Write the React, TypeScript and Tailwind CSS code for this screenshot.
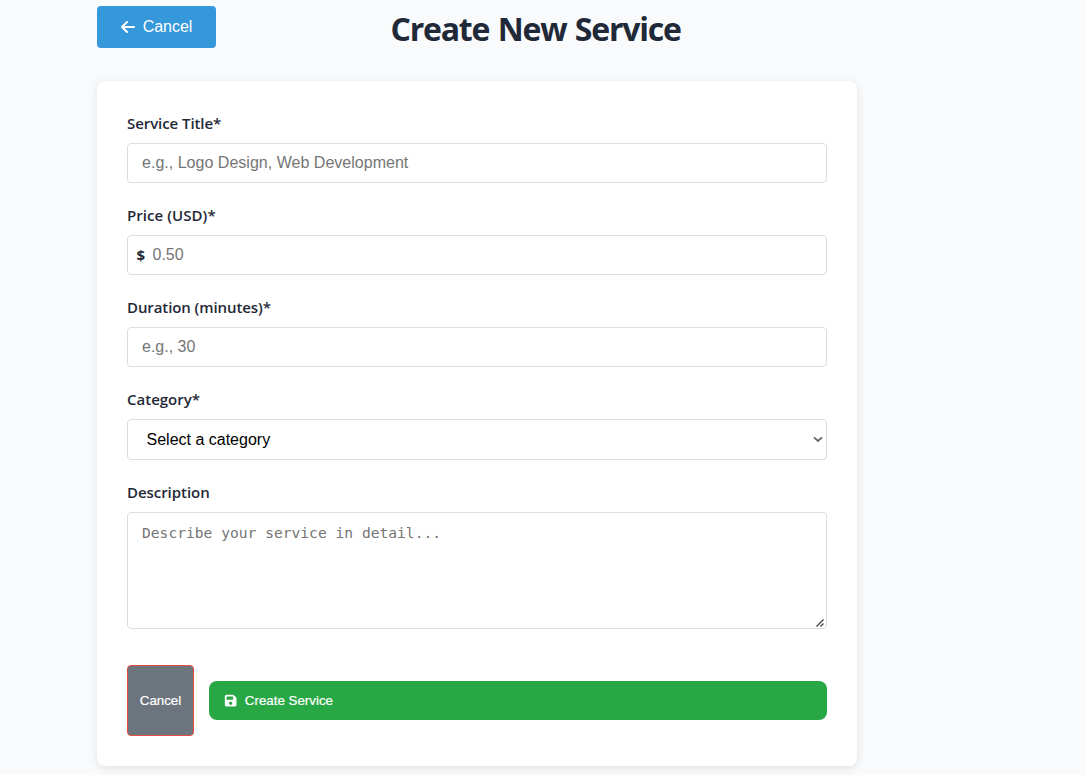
import type { ReactNode } from "react";
import { FaArrowLeft, FaFloppyDisk } from "react-icons/fa6";

const control =
  "block w-full rounded-[4px] border border-[#dddddd] bg-white font-['Liberation_Sans',Arial,sans-serif] text-base outline-none placeholder:text-[#757575] placeholder:opacity-100";

function Field({ id, label, labelClass = "", children }: { id: string; label: string; labelClass?: string; children: ReactNode }) {
  return (
    <div className="flex flex-col gap-2">
      <label htmlFor={id} className="flex h-6 items-center text-[15px] font-semibold text-[#1f2937]">
        <span className={`whitespace-nowrap ${labelClass}`}>{label}</span>
      </label>
      {children}
    </div>
  );
}

export default function App() {
  return (
    <main className="h-[775px] overflow-hidden bg-[#f8fafc] pt-1.5 pl-[97px] font-['Open_Sans','Noto_Sans',sans-serif]">
      <header className="flex h-[42px] items-center">
        <button type="button" className="flex h-[42px] w-[119px] items-center justify-center gap-2 rounded-[4px] bg-[#3498db] font-['Liberation_Sans',Arial,sans-serif] text-base tracking-[-0.05px] text-white">
          <FaArrowLeft className="h-4 w-3.5" preserveAspectRatio="none" />
          Cancel
        </button>
        <h1 className="ml-[174.5px] whitespace-nowrap pt-1 text-[32px] leading-[42px] font-bold tracking-[-1.2px] text-[#1f2937] [word-spacing:1.3px]">Create New Service</h1>
      </header>

      <form className="mt-[33px] flex h-[685px] w-[760px] flex-col gap-5 rounded-lg bg-white p-[30px] shadow-[0_2px_10px_rgba(0,0,0,0.1)]">
        <Field id="title" label="Service Title*" labelClass="tracking-[-0.07px]">
          <input id="title" className={`${control} h-10 px-[14px] tracking-[0.02px]`} placeholder="e.g., Logo Design, Web Development" />
        </Field>
        <Field id="price" label="Price (USD)*" labelClass="tracking-[0.06px]">
          <div className="relative">
            <span className="absolute top-2 left-[9.5px] text-[15px] leading-6 font-bold text-[#1f2937]">$</span>
            <input id="price" className={`${control} h-10 pr-[14px] pl-[24.5px]`} placeholder="0.50" />
          </div>
        </Field>
        <Field id="duration" label="Duration (minutes)*" labelClass="tracking-[-0.09px]">
          <input id="duration" className={`${control} h-10 px-[14px]`} placeholder="e.g., 30" />
        </Field>
        <Field id="category" label="Category*">
          <div className="relative">
            <select id="category" className={`${control} h-[41px] appearance-none px-[18.5px] text-black`}>
              <option>Select a category</option>
            </select>
            <svg className="pointer-events-none absolute top-[17px] right-1 h-[7px] w-[10px]" viewBox="0 0 10 7" fill="none" stroke="#666666" strokeWidth="1.8">
              <path d="M1 1.3 5 5 9 1.3" />
            </svg>
          </div>
        </Field>
        <Field id="description" label="Description" labelClass="tracking-[-0.05px]">
          <div className="relative">
            <textarea
              id="description"
              className="block h-[117px] w-full resize-none rounded-[4px] border border-[#dddddd] bg-white px-[14px] py-[10px] font-['DejaVu_Sans_Mono',monospace] text-[14.62px] leading-[19px] outline-none placeholder:text-[#757575] placeholder:opacity-100"
              placeholder="Describe your service in detail..."
            />
            <svg className="pointer-events-none absolute right-[3px] bottom-[2px] h-2 w-2" viewBox="0 0 8 8" fill="none" stroke="#444444" strokeWidth="1.4">
              <path d="M.5 7.5 7.5 .5M4.5 7.5 7.5 4.5" />
            </svg>
          </div>
        </Field>
        <div className="mt-4 flex items-center gap-[15px] font-['Liberation_Sans',Arial,sans-serif] text-[13.333px] font-medium text-white">
          <button type="button" className="h-[71px] w-[67px] rounded-[4px] border border-[#e74c3c] bg-[#6c757d] [-webkit-text-stroke:0.2px_white]">Cancel</button>
          <button type="button" className="flex h-[39px] flex-1 items-center gap-[7.5px] rounded-lg bg-[#28a745] px-[15px] [-webkit-text-stroke:0.2px_white]">
            <FaFloppyDisk size={13.333} />
            Create Service
          </button>
        </div>
      </form>
    </main>
  );
}
